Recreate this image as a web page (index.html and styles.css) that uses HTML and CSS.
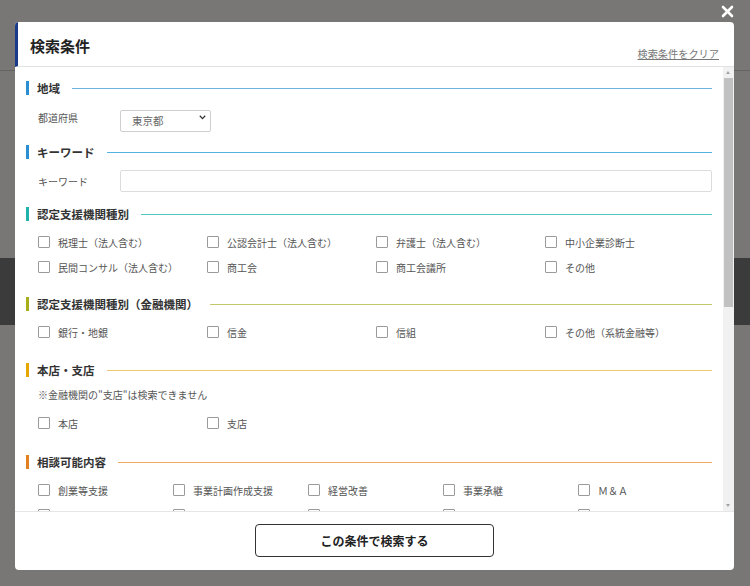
FILE: index.html
```html
<!DOCTYPE html>
<html lang="ja">
<head>
<meta charset="utf-8">
<title>検索条件</title>
<link rel="stylesheet" href="styles.css">
</head>
<body>
<button class="close" type="button" aria-label="閉じる">
  <svg width="13" height="13" viewBox="0 0 13 13"><path d="M2 2 L11 11 M11 2 L2 11" stroke="#fff" stroke-width="2.6" stroke-linecap="round"/></svg>
</button>
<div class="modal">
  <div class="modal-head">
    <h1 class="modal-title">検索条件</h1>
    <a class="clear-link" href="#">検索条件をクリア</a>
  </div>
  <div class="modal-body">
    <div class="scroll-view">
      <section class="sec sec-area">
        <h2 class="sec-head c-blue"><span class="sec-text">地域</span><span class="sec-line"></span></h2>
        <div class="field">
          <span class="field-label">都道府県</span>
          <span class="select-wrap">
            <select class="select"><option>東京都</option></select>
            <svg class="chev" width="7" height="5" viewBox="0 0 7 5"><path d="M0.8 0.8 L3.5 3.6 L6.2 0.8" fill="none" stroke="#333" stroke-width="1.3"/></svg>
          </span>
        </div>
      </section>

      <section class="sec sec-field">
        <h2 class="sec-head c-blue2"><span class="sec-text">キーワード</span><span class="sec-line"></span></h2>
        <div class="field">
          <span class="field-label">キーワード</span>
          <input class="text-input" type="text">
        </div>
      </section>

      <section class="sec sec-checks">
        <h2 class="sec-head c-teal"><span class="sec-text">認定支援機関種別</span><span class="sec-line"></span></h2>
        <div class="checks cols4">
          <label class="check"><span class="box"></span>税理士（法人含む）</label>
          <label class="check"><span class="box"></span>公認会計士（法人含む）</label>
          <label class="check"><span class="box"></span>弁護士（法人含む）</label>
          <label class="check"><span class="box"></span>中小企業診断士</label>
          <label class="check"><span class="box"></span>民間コンサル（法人含む）</label>
          <label class="check"><span class="box"></span>商工会</label>
          <label class="check"><span class="box"></span>商工会議所</label>
          <label class="check"><span class="box"></span>その他</label>
        </div>
      </section>

      <section class="sec sec-checks sec-bank">
        <h2 class="sec-head c-olive"><span class="sec-text">認定支援機関種別（金融機関）</span><span class="sec-line"></span></h2>
        <div class="checks cols4">
          <label class="check"><span class="box"></span>銀行・地銀</label>
          <label class="check"><span class="box"></span>信金</label>
          <label class="check"><span class="box"></span>信組</label>
          <label class="check"><span class="box"></span>その他（系統金融等）</label>
        </div>
      </section>

      <section class="sec sec-checks sec-wide">
        <h2 class="sec-head c-amber"><span class="sec-text">本店・支店</span><span class="sec-line"></span></h2>
        <p class="note">※金融機関の"支店"は検索できません</p>
        <div class="checks cols4">
          <label class="check"><span class="box"></span>本店</label>
          <label class="check"><span class="box"></span>支店</label>
        </div>
      </section>

      <section class="sec sec-checks">
        <h2 class="sec-head c-orange"><span class="sec-text">相談可能内容</span><span class="sec-line"></span></h2>
        <div class="checks cols5">
          <label class="check"><span class="box"></span>創業等支援</label>
          <label class="check"><span class="box"></span>事業計画作成支援</label>
          <label class="check"><span class="box"></span>経営改善</label>
          <label class="check"><span class="box"></span>事業承継</label>
          <label class="check"><span class="box"></span>Ｍ＆Ａ</label>
          <label class="check"><span class="box"></span>人材育成</label>
          <label class="check"><span class="box"></span>生産性向上・業務効率化</label>
          <label class="check"><span class="box"></span>資金繰り支援</label>
          <label class="check"><span class="box"></span>販路開拓</label>
          <label class="check"><span class="box"></span>設備投資・融資等</label>
        </div>
      </section>
    </div>
    <div class="scrollbar" aria-hidden="true">
      <span class="sb-btn sb-up"></span>
      <span class="sb-track"><span class="sb-thumb"></span></span>
      <span class="sb-btn sb-down"></span>
    </div>
  </div>
  <div class="modal-foot">
    <button class="search-btn" type="button">この条件で検索する</button>
  </div>
</div>
</body>
</html>
```

FILE: styles.css
```css
* { box-sizing: border-box; }

html, body {
  margin: 0;
  padding: 0;
}

body {
  width: 750px;
  height: 586px;
  overflow: hidden;
  font-family: "Noto Sans CJK JP", "Noto Sans", sans-serif;
  color: #555;
  background: linear-gradient(to bottom,
    #797775 0, #797775 70px,
    #666462 70px, #666462 71px,
    #797775 71px, #797775 258px,
    #3b3b3b 258px, #3b3b3b 325px,
    #797775 325px, #797775 100%);
  position: relative;
}

.close {
  position: absolute;
  left: 721px;
  top: 5px;
  width: 13px;
  height: 13px;
  padding: 0;
  border: 0;
  background: none;
  display: flex;
}

.modal {
  position: absolute;
  left: 15px;
  top: 22px;
  width: 719px;
  height: 548px;
  background: #fff;
  border-radius: 4px;
  overflow: hidden;
  display: flex;
  flex-direction: column;
}

.modal-head {
  height: 45px;
  flex: none;
  border-left: 3px solid #1b3a8a;
  border-bottom: 1px solid #e2e2e2;
  padding: 0 15px 0 12px;
  display: flex;
  justify-content: space-between;
  align-items: flex-end;
}

.modal-title {
  margin: 0;
  align-self: center;
  padding-top: 3px;
  font-size: 15px;
  font-weight: 700;
  color: #222;
  line-height: 20px;
}

.clear-link {
  font-size: 10.2px;
  line-height: 14px;
  color: #777;
  text-decoration: underline;
  padding-bottom: 5px;
}

.modal-body {
  flex: 1;
  min-height: 0;
  display: flex;
}

.scroll-view {
  flex: 1;
  min-width: 0;
  overflow: hidden;
  padding: 13px 11px 0 11px;
}

.scrollbar {
  width: 11px;
  flex: none;
  background: #f1f1f1;
  display: flex;
  flex-direction: column;
}
.sb-btn {
  height: 11px;
  flex: none;
  position: relative;
}
.sb-up::after,
.sb-down::after {
  content: "";
  position: absolute;
  left: 3px;
  width: 0;
  height: 0;
  border-left: 2.5px solid transparent;
  border-right: 2.5px solid transparent;
}
.sb-up::after {
  top: 4px;
  border-bottom: 3px solid #a3a3a3;
}
.sb-down::after {
  top: 4px;
  border-top: 3px solid #a3a3a3;
}
.sb-track {
  flex: 1;
  padding: 0 1px;
}
.sb-thumb {
  display: block;
  height: 229px;
  background: #c1c1c1;
}

.sec { margin-bottom: 15px; }
.sec-area { margin-bottom: 16px; }
.sec-field { margin-bottom: 14px; }
.sec-checks { margin-bottom: 19px; }
.sec-bank { margin-bottom: 20px; }
.sec-wide { margin-bottom: 21px; }

.sec-head {
  margin: 0 0 10px;
  height: 16px;
  display: flex;
  align-items: center;
  font-size: 11.5px;
  font-weight: 700;
  color: #333;
  line-height: 16px;
}
.sec-head::before {
  content: "";
  width: 3px;
  height: 14px;
  flex: none;
  margin-right: 8px;
  background: var(--bar);
}
.sec-text { white-space: nowrap; }
.sec-line {
  flex: 1;
  height: 1px;
  align-self: flex-start;
  margin: 8px 0 0 12px;
  background: var(--line);
}

.c-blue { --bar: #2a8ed0; --line: #6db3e0; }
.c-blue2 { --bar: #2a8ed0; --line: #52b3e2; }
.c-teal { --bar: #1fb3ab; --line: #54c6c1; }
.c-olive { --bar: #a6ae1c; --line: #c3c86a; }
.c-amber { --bar: #e6a700; --line: #ecc870; }
.c-orange { --bar: #e3801f; --line: #f0a865; }

.field {
  display: flex;
  align-items: center;
  padding-left: 12px;
  height: 22px;
}
.field-label {
  width: 82px;
  flex: none;
  font-size: 10px;
  color: #555;
}

.select-wrap {
  position: relative;
  display: block;
  width: 91px;
  height: 22px;
}
.select {
  appearance: none;
  -webkit-appearance: none;
  width: 100%;
  height: 100%;
  border: 1px solid #cfcfcf;
  border-radius: 2px;
  background: #fff;
  padding: 0 0 0 11px;
  font-family: inherit;
  font-size: 10.5px;
  color: #666;
  outline: none;
}
.chev {
  position: absolute;
  right: 5px;
  top: 9px;
  pointer-events: none;
}

.text-input {
  flex: 1;
  height: 22px;
  border: 1px solid #dcdcdc;
  border-radius: 2px;
  background: #fff;
  outline: none;
  padding: 0 8px;
}

.checks {
  display: grid;
  padding-left: 12px;
  row-gap: 5px;
  grid-auto-rows: 20px;
}
.cols4 { grid-template-columns: repeat(4, 169px); }
.cols5 { grid-template-columns: repeat(5, 135px); }

.check {
  display: flex;
  align-items: center;
  gap: 8px;
  font-size: 10px;
  color: #555;
  white-space: nowrap;
}
.box {
  width: 12px;
  height: 12px;
  flex: none;
  border: 1px solid #9a9a9a;
  border-radius: 1px;
  background: #fff;
}

.note {
  margin: -1px 0 10px;
  padding-left: 12px;
  font-size: 10px;
  line-height: 16px;
  color: #555;
}

.modal-foot {
  flex: none;
  height: 59px;
  border-top: 1px solid #e6e6e6;
  display: flex;
  justify-content: center;
  align-items: flex-start;
  padding-top: 12px;
}

.search-btn {
  width: 239px;
  height: 33px;
  border: 1.5px solid #333;
  border-radius: 4px;
  background: #fff;
  font-family: inherit;
  font-size: 12px;
  font-weight: 700;
  color: #222;
  padding: 0;
}
```
